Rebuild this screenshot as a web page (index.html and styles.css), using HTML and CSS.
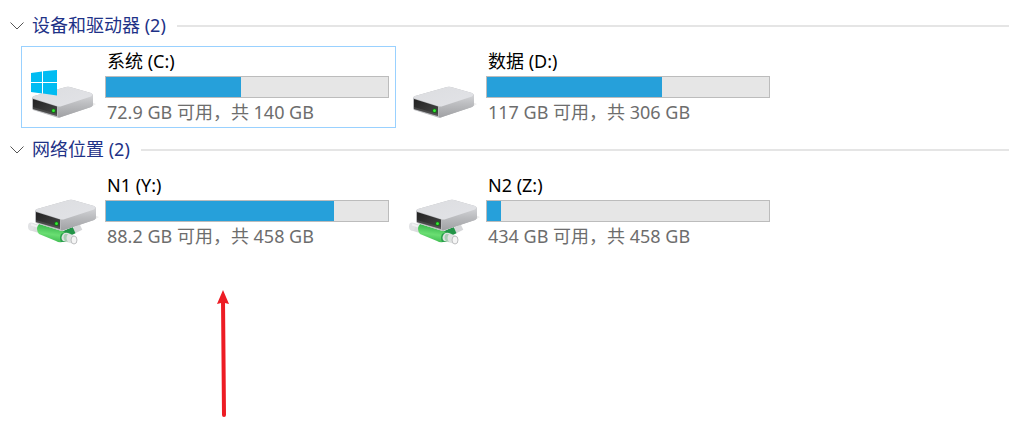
FILE: index.html
```html
<!DOCTYPE html>
<html lang="zh-CN">
<head>
    <meta charset="UTF-8">
    <meta name="viewport" content="width=device-width, initial-scale=1.0">
    <title>此电脑</title>
    <link rel="stylesheet" href="styles.css">
</head>
<body>
    <!-- shared icon parts -->
    <svg class="defs" width="0" height="0" aria-hidden="true">
        <defs>
            <linearGradient id="top" x1="0" y1="0" x2="1" y2="1">
                <stop offset="0" stop-color="#dcdde0"/>
                <stop offset="1" stop-color="#e2e3e7"/>
            </linearGradient>
            <linearGradient id="side" x1="0" y1="0" x2="0" y2="1">
                <stop offset="0" stop-color="#d2d3d6"/>
                <stop offset="0.4" stop-color="#bcbdc0"/>
                <stop offset="1" stop-color="#a0a1a4"/>
            </linearGradient>
            <linearGradient id="face" x1="0" y1="0" x2="1" y2="1">
                <stop offset="0" stop-color="#222"/>
                <stop offset="1" stop-color="#484848"/>
            </linearGradient>
            <linearGradient id="green" x1="0.3" y1="0" x2="0.1" y2="1">
                <stop offset="0" stop-color="#35b44a"/>
                <stop offset="0.5" stop-color="#6ade72"/>
                <stop offset="1" stop-color="#35b44a"/>
            </linearGradient>
            <g id="box">
                <path d="M64 52 L71 55 L66 58 L36 68 Z" fill="#eee"/>
                <path d="M7 49 Q7 48 9 47 L41 38 Q43 37.5 45 38 L66 44 Q68 45 68 47 L68 55 Q68 57 66 58 L36 68 Q34 69 32 68.5 L8 61 Q7 60 7 59 Z" fill="#b9babd"/>
                <path d="M33 57 L68 46 L68 55 Q68 57 66 58 L36 68 Q34 69 33 68 Z" fill="url(#side)"/>
                <path d="M7 49 Q7 48 9 47 L41 38 Q43 37.5 45 38 L66 44 Q69 45.5 66 47.5 L37 57 Q34 58 32 57 Z" fill="url(#top)"/>
                <path d="M8 50 L32 57.5 L32 67 L8 60 Z" fill="url(#face)"/>
                <path d="M8 60 L32 67 L32 65 L8 58 Z" fill="#666" opacity="0.4"/>
                <circle cx="28.5" cy="61.7" r="2.2" fill="#157015"/>
                <circle cx="28.5" cy="61.7" r="1.4" fill="#35ef35"/>
            </g>
            <g id="pipe">
                <path d="M44 60 L56 54" stroke="#d6d7d9" stroke-width="6"/>
                <path d="M36 63 L49 57" stroke="#229447" stroke-width="7"/>
                <path d="M6 53.5 L14 56" stroke="#dcdddf" stroke-width="8"/>
                <ellipse cx="6" cy="53.5" rx="3" ry="4" fill="#e2e3e5"/>
                <path d="M6 51.5 L14 54" stroke="#f1f1f2" stroke-width="2"/>
                <path d="M14 51 L40 59 Q36 64 37 69 Q34 70 31 68 L14 61 Q10 56 14 51 Z" fill="url(#green)"/>
                <path d="M36 61 Q40 58 46 60 L42 69 L36 69 Q34 65 36 61 Z" fill="#2aa04c"/>
                <path d="M38 61 Q40 59 43 60 L50 63 Q53 67 49 71 L38 68 Q35 65 38 61 Z" fill="#dfe2e1"/>
                <path d="M40 61 Q37 64 40 68 L43 69 Q40 65 43 61 Z" fill="#a9cdb4"/>
                <ellipse cx="49" cy="67" rx="3" ry="4" fill="#f5f5f5" stroke="#bebfc1"/>
            </g>
            <g id="windows" fill="#00bcf2">
                <path d="M6 24 L17 22.5 V33 H6 Z"/>
                <path d="M18 22.3 L32 21 V33 H18 Z"/>
                <path d="M6 34 H17 V44.5 L6 43 Z"/>
                <path d="M18 34 H32 V46.5 L18 44.6 Z"/>
            </g>
        </defs>
    </svg>

    <main class="explorer">
        <section class="group">
            <button class="group-header" type="button" aria-expanded="true">
                <svg class="chevron" viewBox="0 0 14 8" aria-hidden="true"><path d="M0.5 0.5 L7 7 L13.5 0.5"/></svg>
                <span class="title">设备和驱动器 (2)</span>
            </button>
            <ul class="drives">
                <li class="drive selected">
                    <svg class="icon" viewBox="0 0 76 76" aria-hidden="true">
                        <use href="#box"/>
                        <use href="#windows"/>
                    </svg>
                    <div class="details">
                        <div class="name">系统 (C:)</div>
                        <div class="bar"><div class="used" style="width: 48%"></div></div>
                        <div class="space">72.9 GB 可用，共 140 GB</div>
                    </div>
                </li>
                <li class="drive">
                    <svg class="icon" viewBox="0 0 76 76" aria-hidden="true">
                        <use href="#box"/>
                    </svg>
                    <div class="details">
                        <div class="name">数据 (D:)</div>
                        <div class="bar"><div class="used" style="width: 62%"></div></div>
                        <div class="space">117 GB 可用，共 306 GB</div>
                    </div>
                </li>
            </ul>
        </section>

        <section class="group">
            <button class="group-header" type="button" aria-expanded="true">
                <svg class="chevron" viewBox="0 0 14 8" aria-hidden="true"><path d="M0.5 0.5 L7 7 L13.5 0.5"/></svg>
                <span class="title">网络位置 (2)</span>
            </button>
            <ul class="drives">
                <li class="drive">
                    <svg class="icon" viewBox="0 0 76 76" aria-hidden="true">
                        <use href="#pipe"/>
                        <use href="#box" x="3" y="-11"/>
                    </svg>
                    <div class="details">
                        <div class="name">N1 (Y:)</div>
                        <div class="bar"><div class="used" style="width: 81%"></div></div>
                        <div class="space">88.2 GB 可用，共 458 GB</div>
                    </div>
                </li>
                <li class="drive">
                    <svg class="icon" viewBox="0 0 76 76" aria-hidden="true">
                        <use href="#pipe"/>
                        <use href="#box" x="3" y="-11"/>
                    </svg>
                    <div class="details">
                        <div class="name">N2 (Z:)</div>
                        <div class="bar"><div class="used" style="width: 5%"></div></div>
                        <div class="space">434 GB 可用，共 458 GB</div>
                    </div>
                </li>
            </ul>
        </section>

        <svg class="arrow" viewBox="0 0 14 128" aria-hidden="true">
            <path d="M7 10 L8 125" stroke="#ed1c24" stroke-width="4" stroke-linecap="round"/>
            <path d="M7 0 L13 14 L7 12.5 L1 14 Z" fill="#ed1c24"/>
        </svg>
    </main>
</body>
</html>
```
FILE: styles.css
```css
body {
    margin: 0;
    background: #fff;
    color: #000;
    font-family: "Noto Sans", "Noto Sans CJK SC", sans-serif;
    font-size: 18px;
    line-height: 24px;
}
.defs {
    position: absolute;
}
.explorer {
    position: relative;
    box-sizing: border-box;
    min-height: 100vh;
    padding-top: 6px;
}
.group {
    margin-bottom: 2px;
}
.group-header {
    display: flex;
    align-items: center;
    width: 100%;
    height: 40px;
    padding: 0 0 0 10px;
    border: none;
    background: none;
    color: #1e3287;
    font: inherit;
    white-space: nowrap;
}
.group-header::after {
    content: "";
    flex: 1;
    height: 2px;
    margin-left: 11px;
    background: #e5e5e5;
}
.title {
    padding-bottom: 2px;
}
.chevron {
    width: 14px;
    height: 8px;
    margin-right: 8px;
    fill: none;
    stroke: #555;
}
.drives {
    display: flex;
    flex-wrap: wrap;
    gap: 6px;
    margin: 0;
    padding: 0 0 0 21px;
    list-style: none;
}
.drive {
    display: flex;
    gap: 4px;
    box-sizing: border-box;
    width: 375px;
    padding: 2px 6px 2px 3px;
    border: 1px solid transparent;
}
.selected {
    border-color: #99d1ff;
}
.icon {
    width: 76px;
    height: 76px;
}
.details {
    flex: 1;
}
.name, .space {
    padding-left: 2px;
    white-space: nowrap;
}
.space {
    color: #6d6d6d;
}
.bar {
    height: 20px;
    margin: 3px 0 2px;
    border: 1px solid #bcbcbc;
    background: #e6e6e6;
}
.used {
    height: 100%;
    background: #26a0da;
}
/* callout pointing at the first network drive */
.arrow {
    position: absolute;
    left: 216px;
    top: 290px;
    width: 14px;
    height: 128px;
}
```
